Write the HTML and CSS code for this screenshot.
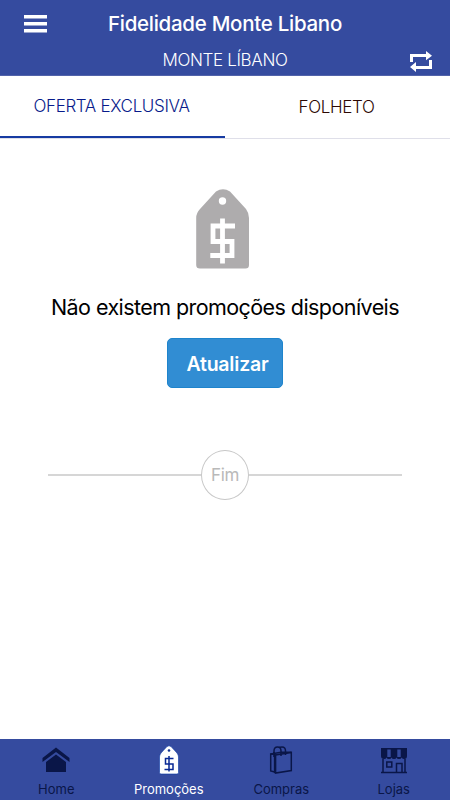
FILE: index.html
```html
<!DOCTYPE html>
<html lang="pt-BR">
<head>
<meta charset="utf-8">
<meta name="viewport" content="width=device-width, initial-scale=1">
<title>Fidelidade Monte Libano</title>
<link rel="stylesheet" href="styles.css">
</head>
<body>
<div class="app">
  <header class="header">
    <div class="title-row">
      <svg class="menu" width="23" height="18" viewBox="0 0 23 18" fill="#fff"><path d="M0 0h23v3.5H0zM0 7h23v3.5H0zM0 14h23v3.5H0z"/></svg>
      <h1 class="title"><span>Fidelidade Monte Libano</span></h1>
    </div>
    <div class="store-row">
      <span class="store">MONTE LÍBANO</span>
      <svg class="swap" width="22" height="21" viewBox="0 0 22 21" fill="#fff"><path d="M0 11V3h16V0l6 4.700-6 4.600V6H3v5zM22 9v9H6v3l-6-5 6-5v4h13V9z"/></svg>
    </div>
  </header>
  <nav class="tabs">
    <a class="tab active"><span>OFERTA EXCLUSIVA</span></a>
    <a class="tab"><span>FOLHETO</span></a>
  </nav>
  <main class="content">
    <svg class="tag" width="54" height="80" viewBox="0 0 54 80"><path fill="#aeacad" fill-rule="evenodd" d="M20 2.500Q27-2 34 2.500L50 20Q53 24 53 29V76Q53 79.500 49.500 79.500H4Q.2 79.500 .2 76V29Q.2 24 4 20zM26.500 8.300a3.700 3.700 0 1 0 0 7.400 3.700 3.700 0 0 0 0-7.400"/><path d="M39 37H17V52.500H36V66.500H14.300M26.500 29.500V74.500" fill="none" stroke="#fff" stroke-width="4.800"/></svg>
    <p class="message">Não existem promoções disponíveis</p>
    <button class="refresh"><span>Atualizar</span></button>
    <div class="end"><span class="end-badge"><span>Fim</span></span></div>
  </main>
  <footer class="bottom">
    <a class="item">
      <svg width="28" height="30" viewBox="0 0 28 30" fill="#0a1648"><path d="M14 2.500 27.500 13v4L14 7 .5 17v-4zM14 9.500 24 17v10H4V17z"/></svg>
      <span>Home</span>
    </a>
    <a class="item active">
      <svg width="20" height="30" viewBox="0 0 20 30"><path fill="#fff" stroke="#0938a5" stroke-width=".6" d="M8 1.500Q10 0 12 1.500L18 8Q19.500 10 19.500 12V27.500Q19.500 29 18 29H2Q.5 29 .5 27.500V12Q.5 10 2 8z"/><circle cx="10" cy="5.500" r="1.300" fill="#16358f"/><path d="M14.500 13.500H6.500v5.500h7.500v5.500H5.500M10 11v15.500" fill="none" stroke="#082994" stroke-width="1.500"/></svg>
      <span>Promoções</span>
    </a>
    <a class="item">
      <svg width="24" height="30" viewBox="0 0 24 30" fill="none" stroke="#0a1648" stroke-width="1.500"><path d="M1.700 9h4v18l-4-1z"/><path d="M6.500 10 22.300 7.500v18L6.500 28z"/><path d="M6 9.500V28" stroke-width="2.200"/><path d="M5 12V6q0-4 3.500-4T12 6v5M10 3q1-1 3-1 3.500 0 3.500 4v4M1.700 9 12 7.300h10.300"/></svg>
      <span>Compras</span>
    </a>
    <a class="item">
      <svg width="28" height="30" viewBox="0 0 28 30" fill="none" stroke="#0a1648" stroke-width="1.500"><path fill="#0a1648" stroke="none" d="M1 3h26v8q0 3-2.700 3-2 0-2.600-1.500Q21 14 19 14t-2.500-1.500Q16 14 14 14t-2.500-1.500Q11 14 9 14t-2.500-1.500Q6 14 4 14q-3 0-3-3z"/><path stroke="#354b9f" stroke-width="3.400" d="M9 4.500V12M19 4.500V12"/><path d="M3 14v13M25 14v13M1 27.500h26M6.800 17h5v5h-5zM16.500 27v-8.500h5.500V27"/></svg>
      <span>Lojas</span>
    </a>
  </footer>
</div>
</body>
</html>
```

FILE: styles.css
```css
* { box-sizing: border-box; }
body { margin: 0; font-family: Inter, "Liberation Sans", sans-serif; background: #fff; }
.app { width: 450px; height: 800px; display: flex; flex-direction: column; overflow: hidden; }
.header { height: 76px; background: #354b9f; color: #fff; border-bottom: 1px solid #5263aa; }
.title-row { height: 47px; display: grid; grid-template-columns: 84px 1fr 84px; align-items: center; }
.menu { margin-left: 24px; }
.title { margin: 0; font-size: 20.5px; font-weight: 550; letter-spacing: -0.28px; text-align: center; white-space: nowrap; }
.store-row { height: 28px; display: grid; grid-template-columns: 40px 1fr 40px; align-items: center; }
.store { grid-column: 2; text-align: center; font-size: 17px; font-weight: 300; line-height: 24px; margin-top: -2px; letter-spacing: -0.35px; }
.swap { margin-top: 1px; }
.tabs { height: 63px; display: flex; border-bottom: 1px solid #dfdfe9; }
.tab { width: 225px; height: 62px; padding: 1px 2px 0 0; font-size: 17px; font-weight: 300; line-height: 60px; letter-spacing: -0.35px; text-align: center; color: #2c0802; }
.tab.active { color: #081b8b; border-bottom: 2px solid #173ba2; padding: 0 2px 0 0; }
.content { flex: 1; display: flex; flex-direction: column; align-items: center; }
.tag { margin-top: 50px; margin-right: 4px; }
.message { margin: 23px 0 0; height: 30px; line-height: 30px; font-size: 21.5px; letter-spacing: -0.57px; color: #000; white-space: nowrap; }
.refresh { margin-top: 16px; width: 116px; height: 50px; padding: 2px 0 0 5px; font: 600 19.500px Inter, sans-serif; letter-spacing: -0.2px; color: #fff; background: #318dd3; border: 1px solid #1e84cc; border-radius: 5px; }
.end { width: 354px; height: 50px; margin-top: 62px; display: flex; align-items: center; }
.end::before, .end::after { content: ""; flex: 1; height: 2px; background: #d6d6d6; }
.end-badge { width: 48px; height: 50px; border: 1.500px solid #c7c7c7; border-radius: 50%; display: flex; align-items: center; justify-content: center; font-size: 17px; letter-spacing: -0.3px; color: #b9b9b9; }
.bottom { height: 61px; background: #354b9f; display: grid; grid-template-columns: repeat(4, 1fr); }
.item { display: flex; flex-direction: column; align-items: center; padding-top: 6px; font-size: 13px; line-height: 16px; color: #0a1648; }
.item span { margin-top: -1px; padding-top: 7px; }
.item.active { color: #fff; }
```
